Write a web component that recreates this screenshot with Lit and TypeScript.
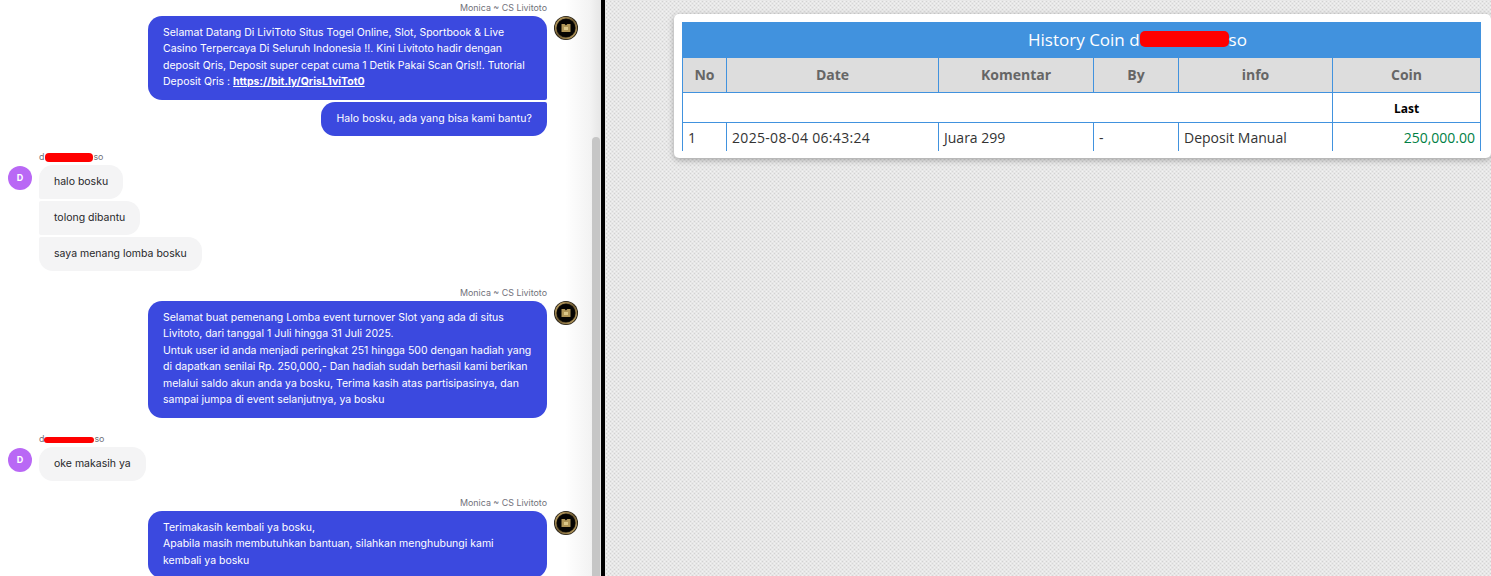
import { LitElement, html, css } from "lit";
import { customElement } from "lit/decorators.js";

const logo = html`<svg class="logo" viewBox="0 0 24 24" width="24" height="24">
  <defs>
    <linearGradient id="ring" x1="0" y1="0" x2="1" y2="1">
      <stop offset="0" stop-color="#c9ab6a"/><stop offset="0.5" stop-color="#6b5730"/><stop offset="1" stop-color="#c2a565"/>
    </linearGradient>
  </defs>
  <circle cx="12" cy="12" r="12" fill="#1c1810"/>
  <circle cx="12" cy="12" r="10.4" fill="none" stroke="url(#ring)" stroke-width="1.6"/>
  <circle cx="12" cy="12" r="9" fill="#050403"/>
  <path d="M7.5 8h3.2l1.2 1.4L13.4 8h3.1v8h-9z" fill="#b09658"/>
  <path d="M10 11h4v3h-4z" fill="#dcc88a"/>
</svg>`;

@customElement("app-root")
export class AppRoot extends LitElement {
  static styles = css`
    :host { display: block; width: 1491px; height: 576px; overflow: hidden; }
    .page { display: flex; height: 576px; }
    .chat {
      position: relative; box-sizing: border-box; width: 601px; height: 576px; overflow: hidden; flex: none;
      background: linear-gradient(to right, #fff 0, #fff 565px, #f3f3f3 590px, #e6e6e6 601px);
      font-family: Inter, sans-serif; font-size: 10.5px; line-height: 16.5px;
      padding: 2px 54px 0 8px;
    }
    .thumb { position: absolute; left: 592px; top: 137px; width: 8px; bottom: 0; background: #c6c6c6; border-radius: 4px 4px 0 0; }
    .divider { width: 4px; flex: none; background: #000; }
    .label { font-size: 8.9px; line-height: 12px; color: #71717a; }
    .label.me { text-align: right; }
    .label.them { margin-left: 31px; }
    .redact { display: inline-block; background: #f00; border-radius: 4px; vertical-align: middle; }
    .lbl1 { width: 48px; height: 9px; margin-left: 1px; }
    .lbl2 { width: 50px; height: 6px; }
    .title .redact { width: 89px; height: 16px; border-radius: 5px; }
    .group { display: flex; flex-direction: column; gap: 2px; position: relative; }
    .me-group { align-items: flex-end; margin-top: 2px; }
    .them-group { align-items: flex-start; margin: 2px 0 0 31px; }
    .bubble { box-sizing: border-box; padding: 8.6px 15px 9.4px; border-radius: 14px; }
    .one { height: 34px; }
    .me-group .bubble { background: #3b49df; color: #fff; width: 399px; }
    .me-group .bubble.short { width: auto; letter-spacing: 0.055px; }
    .them-group .bubble { background: #f4f4f5; color: #27272a; }
    .me-group .top { border-bottom-right-radius: 2px; }
    .me-group .bottom { border-top-right-radius: 2px; }
    .them-group .top { border-bottom-left-radius: 2px; }
    .them-group .mid { border-top-left-radius: 2px; border-bottom-left-radius: 2px; }
    .them-group .bottom { border-top-left-radius: 2px; }
    .bubble a { color: #fff; font-weight: 700; text-decoration: underline; }
    .logo { position: absolute; right: -31px; top: 0; }
    .avatar {
      position: absolute; left: -31px; top: 1px; width: 24px; height: 24px; border-radius: 50%;
      background: #b968f5; color: #fff; font-size: 9px; font-weight: 700;
      display: flex; align-items: center; justify-content: center;
    }
    .gap15 { margin-top: 15px; }
    .gap16 { margin-top: 16px; }

    .bg {
      flex: 1; min-width: 0; height: 576px; box-sizing: border-box; padding: 14px 0 0 69px;
      background-color: #e7e7e7;
      background-image:
        radial-gradient(circle at 1.5px 1.5px, #d2d2d2 0.7px, transparent 0.8px),
        radial-gradient(circle at 3.5px 3.5px, #d8d8d8 0.7px, transparent 0.8px),
        radial-gradient(circle at 3.5px 1.5px, #f1f1f1 0.7px, transparent 0.8px),
        radial-gradient(circle at 1.5px 3.5px, #f3f3f3 0.7px, transparent 0.8px);
      background-size: 4px 4px;
    }
    .card {
      box-sizing: border-box; height: 144px; padding: 8px 10px 7px 8px; background: #fff;
      border-radius: 5px; box-shadow: 0 2px 6px rgba(0, 0, 0, 0.3);
      font-family: "Open Sans", sans-serif;
    }
    .clip { height: 129px; overflow: hidden; }
    .title {
      height: 36px; box-sizing: border-box; padding: 0 0 2px 112px; background: #4192de; color: #fff; font-size: 17px;
      display: flex; align-items: center; justify-content: center;
    }
    table { border-collapse: collapse; table-layout: fixed; width: 799px; font-size: 14px; color: #333; }
    th, td { border: 1px solid #4192de; box-sizing: border-box; padding: 0 5px; }
    thead th { height: 34px; background: #ddd; color: #666; font-size: 14px; font-weight: 700; border-top: 0; text-align: center; }
    .sub td { height: 30px; }
    .last { text-align: center; font-size: 12px; font-weight: 700; color: #000; padding-top: 2px; }
    .data td { height: 30px; border-bottom: 0; }
    .date { letter-spacing: 0.32px; }
    .coin { text-align: right; color: #008045; }
  `;

  render() {
    return html`<div class="page">
      <section class="chat">
        <div class="label me">Monica ~ CS Livitoto</div>
        <div class="group me-group">
          ${logo}
          <div class="bubble top">Selamat Datang Di LiviToto Situs Togel Online, Slot, Sportbook &amp; Live Casino Terpercaya Di Seluruh Indonesia !!. Kini Livitoto hadir dengan deposit Qris, Deposit super cepat cuma 1 Detik Pakai Scan Qris!!. Tutorial Deposit Qris : <a>https://bit.ly/QrisL1viTot0</a></div>
          <div class="bubble bottom short one">Halo bosku, ada yang bisa kami bantu?</div>
        </div>
        <div class="gap15">
          <div class="label them">d<span class="redact lbl1"></span>so</div>
          <div class="group them-group">
            <div class="avatar">D</div>
            <div class="bubble top one">halo bosku</div>
            <div class="bubble mid one">tolong dibantu</div>
            <div class="bubble bottom one">saya menang lomba bosku</div>
          </div>
        </div>
        <div class="gap16">
          <div class="label me">Monica ~ CS Livitoto</div>
          <div class="group me-group">
            ${logo}
            <div class="bubble">Selamat buat pemenang Lomba event turnover Slot yang ada di situs Livitoto, dari tanggal 1 Juli hingga 31 Juli 2025.<br />Untuk user id anda menjadi peringkat 251 hingga 500 dengan hadiah yang di dapatkan senilai Rp. 250,000,- Dan hadiah sudah berhasil kami berikan melalui saldo akun anda ya bosku, Terima kasih atas partisipasinya, dan sampai jumpa di event selanjutnya, ya bosku</div>
          </div>
        </div>
        <div class="gap15">
          <div class="label them">d<span class="redact lbl2"></span>so</div>
          <div class="group them-group">
            <div class="avatar">D</div>
            <div class="bubble one">oke makasih ya</div>
          </div>
        </div>
        <div class="gap16">
          <div class="label me">Monica ~ CS Livitoto</div>
          <div class="group me-group">
            ${logo}
            <div class="bubble">Terimakasih kembali ya bosku,<br />Apabila masih membutuhkan bantuan, silahkan menghubungi kami kembali ya bosku</div>
          </div>
        </div>
        <div class="thumb"></div>
      </section>
      <div class="divider"></div>
      <main class="bg">
        <div class="card">
          <div class="clip">
            <div class="title">History Coin d<span class="redact"></span>so</div>
            <table>
              <colgroup>
                <col style="width:44px" /><col style="width:212px" /><col style="width:155px" />
                <col style="width:85px" /><col style="width:154px" /><col />
              </colgroup>
              <thead><tr><th>No</th><th>Date</th><th>Komentar</th><th>By</th><th>info</th><th>Coin</th></tr></thead>
              <tbody>
                <tr class="sub"><td colspan="5"></td><td class="last">Last</td></tr>
                <tr class="data"><td>1</td><td class="date">2025-08-04 06:43:24</td><td>Juara 299</td><td>-</td><td>Deposit Manual</td><td class="coin">250,000.00</td></tr>
              </tbody>
            </table>
          </div>
        </div>
      </main>
    </div>`;
  }
}
